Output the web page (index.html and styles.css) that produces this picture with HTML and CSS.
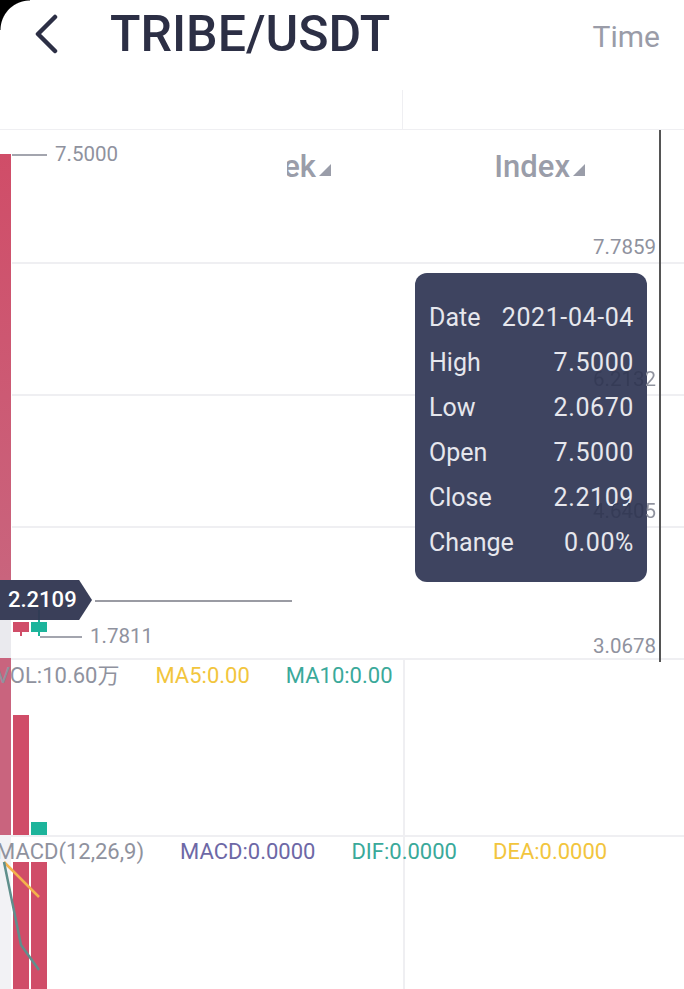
FILE: index.html
```html
<!DOCTYPE html>
<html lang="en">
<head>
    <meta charset="UTF-8">
    <meta name="viewport" content="width=device-width, initial-scale=1.0">
    <title>TRIBE/USDT</title>
    <link rel="stylesheet" href="styles.css">
</head>
<body>
    <div class="corner"></div>

    <header class="topbar">
        <a class="back" aria-label="Back">
            <svg width="24" height="40" viewBox="0 0 24 40">
                <path d="M21 3 L4 20 L21 37" fill="none" stroke="#2c2f45" stroke-width="4.5" stroke-linecap="round" stroke-linejoin="round"/>
            </svg>
        </a>
        <h1 class="pair">TRIBE/USDT</h1>
        <span class="mode">Time</span>
    </header>

    <div class="tabs">
        <div class="tab"></div>
        <div class="tab"></div>
    </div>

    <section class="chart">
        <!-- grid -->
        <div class="grid-line" style="top: 132px"></div>
        <div class="grid-line" style="top: 264px"></div>
        <div class="grid-line" style="top: 396px"></div>
        <div class="grid-line full" style="top: 528px"></div>
        <div class="grid-line full" style="top: 705px"></div>
        <div class="split-line"></div>
        <div class="axis-line"></div>

        <!-- tab labels bleeding through -->
        <div class="tab-label week"><span>Week</span><i class="corner-tri"></i></div>
        <div class="tab-label index"><span>Index</span><i class="corner-tri"></i></div>

        <!-- left strips -->
        <div class="strip strip-bar"></div>
        <div class="strip strip-gray" style="top: 450px; height: 78px"></div>
        <div class="strip strip-pink" style="top: 528px; height: 177px"></div>
        <div class="strip strip-gray light" style="top: 705px; height: 154px"></div>

        <!-- max / min markers -->
        <div class="mark-line" style="top: 24px; left: 12px; width: 35px"></div>
        <span class="mark" style="top: 12px; left: 55px">7.5000</span>
        <div class="mark-line" style="top: 506px; left: 40px; width: 42px"></div>
        <span class="mark" style="top: 494px; left: 90px">1.7811</span>

        <!-- candles -->
        <div class="wick red" style="left: 20px; top: 498px; height: 8px"></div>
        <div class="body red" style="left: 13px; top: 492px; height: 10px"></div>
        <div class="wick green" style="left: 38px; top: 480px; height: 26px"></div>
        <div class="body green" style="left: 31px; top: 492px; height: 10px"></div>

        <!-- current price -->
        <div class="price-line"></div>
        <div class="price-tag">2.2109</div>

        <!-- right axis -->
        <span class="axis-label" style="top: 105px">7.7859</span>
        <span class="axis-label covered" style="top: 237px">6.2132</span>
        <span class="axis-label covered" style="top: 369px">4.6405</span>
        <span class="axis-label" style="top: 504px">3.0678</span>

        <!-- volume -->
        <div class="legend vol-legend">
            <span class="gray">VOL:10.60万</span>
            <span class="yellow">MA5:0.00</span>
            <span class="teal">MA10:0.00</span>
        </div>
        <div class="bar red" style="left: 13px; top: 585px; height: 120px"></div>
        <div class="bar green" style="left: 31px; top: 692px; height: 13px"></div>

        <!-- macd -->
        <div class="legend macd-legend">
            <span class="gray">MACD(12,26,9)</span>
            <span class="purple">MACD:0.0000</span>
            <span class="teal">DIF:0.0000</span>
            <span class="yellow">DEA:0.0000</span>
        </div>
        <div class="bar red" style="left: 13px; top: 732px; height: 127px"></div>
        <div class="bar red" style="left: 31px; top: 732px; height: 127px"></div>
        <svg class="macd-lines" width="60" height="130" viewBox="0 0 60 130">
            <path d="M4 2 L39 37" stroke="#f4b24c" stroke-width="2.5" fill="none"/>
            <path d="M4 2 L21 85 L39 110" stroke="#5f8f8c" stroke-width="2.5" fill="none"/>
        </svg>

        <!-- tooltip -->
        <div class="tooltip">
            <div class="tip-row"><span>Date</span><span class="tip-value">2021-04-04</span></div>
            <div class="tip-row"><span>High</span><span class="tip-value">7.5000</span></div>
            <div class="tip-row"><span>Low</span><span class="tip-value">2.0670</span></div>
            <div class="tip-row"><span>Open</span><span class="tip-value">7.5000</span></div>
            <div class="tip-row"><span>Close</span><span class="tip-value">2.2109</span></div>
            <div class="tip-row"><span>Change</span><span class="tip-value">0.00%</span></div>
        </div>
    </section>
</body>
</html>
```

FILE: styles.css
```css
* {
    margin: 0;
    padding: 0;
    box-sizing: border-box;
}

body {
    font-family: Roboto, 'Liberation Sans', 'Noto Sans CJK SC', sans-serif;
    background-color: #ffffff;
    width: 684px;
    height: 989px;
    overflow: hidden;
    position: relative;
}

.corner {
    position: absolute;
    top: 0;
    left: 0;
    width: 30px;
    height: 30px;
    background: radial-gradient(circle at 30px 30px, transparent 29px, #000 30px);
    z-index: 5;
}

/* Header */
.topbar {
    display: flex;
    align-items: center;
    height: 90px;
    padding: 0 24px 22px 34px;
}

.back {
    display: flex;
    width: 24px;
    margin-right: 52px;
}

.pair {
    font-size: 50px;
    font-weight: 500;
    color: #2c2f45;
    flex: 1;
}

.mode {
    font-size: 30px;
    color: #9a9ca8;
    margin-top: 4px;
}

.tabs {
    display: flex;
    height: 40px;
    border-bottom: 1.5px solid #efeff2;
}

.tab {
    width: 403px;
    border-right: 1.5px solid #efeff2;
}

.tab + .tab {
    flex: 1;
    border-right: none;
}

/* Chart canvas */
.chart {
    position: relative;
    height: 859px;
    overflow: hidden;
}

.grid-line {
    position: absolute;
    left: 12px;
    right: 0;
    height: 1.5px;
    background-color: #efeff2;
}

.grid-line.full {
    left: 0;
}

.split-line {
    position: absolute;
    left: 403px;
    top: 528px;
    bottom: 0;
    width: 1.5px;
    background-color: #efeff2;
}

.axis-line {
    position: absolute;
    left: 659px;
    top: 0;
    width: 1.5px;
    height: 532px;
    background-color: #555;
}

.tab-label {
    position: absolute;
    top: 18px;
    display: flex;
    align-items: flex-end;
    justify-content: flex-end;
    font-size: 31px;
    font-weight: 500;
    color: #9a9da9;
    overflow: hidden;
    white-space: nowrap;
}

.tab-label.week {
    left: 287px;
    width: 44px;
}

.tab-label.index {
    left: 487px;
    width: 98px;
}

.corner-tri {
    display: inline-block;
    width: 12px;
    height: 12px;
    margin: 0 0 9px 3px;
    background-color: #9a9da9;
    clip-path: polygon(100% 0, 100% 100%, 0 100%);
    flex-shrink: 0;
}

.strip {
    position: absolute;
    left: 0;
    width: 11px;
}

.strip-bar {
    top: 24px;
    height: 426px;
    background: linear-gradient(#d04d68, #c9647d);
}

.strip-gray {
    background-color: #eaeaee;
}

.strip-gray.light {
    background-color: #f2f2f5;
}

.strip-pink {
    background-color: #c9647e;
}

.mark-line {
    position: absolute;
    height: 1.5px;
    background-color: #a3a5ae;
}

.mark,
.axis-label {
    position: absolute;
    font-size: 20.5px;
    line-height: 24px;
    color: #8f929e;
}

.axis-label {
    right: 28px;
    z-index: 3;
}

/* the part of the label lying over the tooltip shows darker */
.axis-label.covered {
    color: transparent;
    background: linear-gradient(90deg, #353b56 53px, #8f929e 53px);
    -webkit-background-clip: text;
    background-clip: text;
}

.wick {
    position: absolute;
    width: 2px;
}

.body,
.bar {
    position: absolute;
    width: 16px;
}

.body {
    height: 10px;
}

.red {
    background-color: #d04d68;
}

.green {
    background-color: #1db49b;
}

.price-line {
    position: absolute;
    left: 95px;
    top: 470px;
    width: 197px;
    height: 1.5px;
    background-color: #9a9ba3;
}

.price-tag {
    position: absolute;
    left: 0;
    top: 450px;
    width: 92px;
    height: 40px;
    padding-left: 8px;
    line-height: 40px;
    font-size: 22px;
    font-weight: 500;
    color: #ffffff;
    background-color: rgba(50, 55, 82, 0.96);
    clip-path: polygon(0 0, 86% 0, 100% 50%, 86% 100%, 0 100%);
    z-index: 2;
}

/* Legends */
.legend {
    position: absolute;
    display: flex;
    gap: 36px;
    font-size: 22px;
    line-height: 26px;
    white-space: nowrap;
}

.vol-legend {
    left: -4px;
    top: 533px;
}

.macd-legend {
    left: -4px;
    top: 709px;
    z-index: 2;
}

.gray {
    color: #8f929e;
}

.yellow {
    color: #f2c53d;
}

.teal {
    color: #3aa99a;
}

.purple {
    color: #6d68a6;
}

.macd-lines {
    position: absolute;
    left: 0;
    top: 730px;
    z-index: 1;
}

/* Tooltip */
.tooltip {
    position: absolute;
    left: 415px;
    top: 143px;
    width: 232px;
    height: 309px;
    padding: 22px 13px 0 14px;
    border-radius: 12px;
    background-color: #3e4460;
    z-index: 2;
}

.tip-row {
    display: flex;
    justify-content: space-between;
    align-items: center;
    height: 45px;
    font-size: 25px;
    color: #e6e7ed;
}

.tip-value {
    letter-spacing: 0.6px;
}
```
